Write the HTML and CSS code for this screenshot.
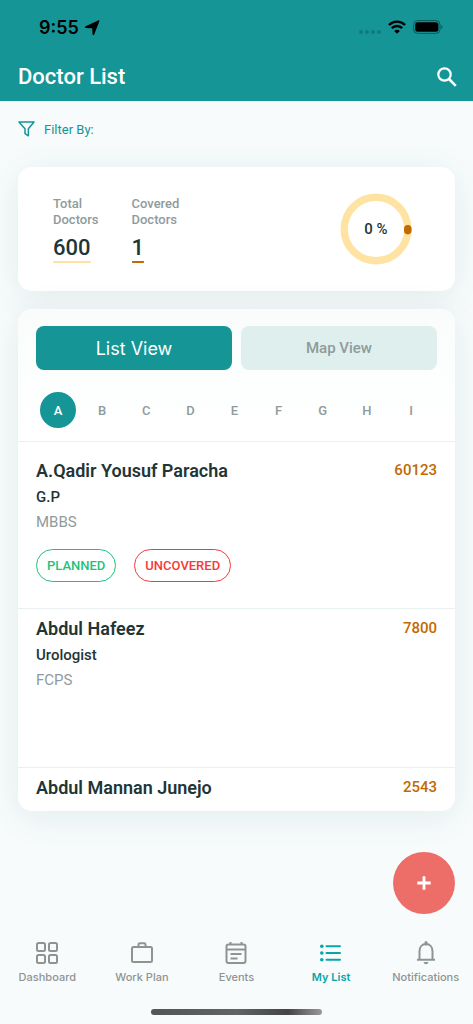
FILE: index.html
```html
<!DOCTYPE html>
<html lang="en">
<head>
<meta charset="utf-8">
<meta name="viewport" content="width=device-width, initial-scale=1">
<title>Doctor List</title>
<link rel="stylesheet" href="styles.css">
</head>
<body>
<div class="app">
  <header class="header">
    <div class="status">
      <div class="status-left">
        <span class="time">9:55</span>
        <svg width="16" height="16" viewBox="0 0 16 16"><path d="M15.300 1.200 10.200 14.600c-.3.8-1.500.8-1.600-.2L8.200 8.300 1.800 7.900C.8 7.800.7 6.600 1.600 6.200L14.200.400c.9-.3 1.400 0 1.100.8z"/></svg>
      </div>
      <div class="status-right">
        <svg width="22" height="6" viewBox="0 0 22 6" fill="#107a7c"><circle cx="2" cy="3" r="2"/><circle cx="8" cy="3" r="2"/><circle cx="14" cy="3" r="2"/><circle cx="20" cy="3" r="2"/></svg>
        <svg class="wifi" width="18" height="14" viewBox="0 0 18 14" fill="none" stroke="#000" stroke-width="2.400"><path d="M1 5c4.500-4.500 11.500-4.500 16 0M3.800 8.100c3-2.900 7.400-2.900 10.400 0"/><path d="M9 13.800 6.200 10.900c1.600-1.500 4-1.500 5.600 0z" fill="#000" stroke="none"/></svg>
        <svg width="30" height="14" viewBox="0 0 30 14"><rect x=".6" y=".6" width="26.400" height="12.800" rx="4" fill="none" stroke="#0c5759"/><rect x="2.200" y="2.200" width="23.200" height="9.600" rx="2.500"/><path d="M28.200 5v4c1.600-.6 1.600-3.400 0-4z" fill="#0c5759"/></svg>
      </div>
    </div>
    <div class="titlebar">
      <h1 class="title">Doctor List</h1>
      <button class="icon-button" aria-label="Search"><svg width="20" height="20" viewBox="0 0 20 20" fill="none" stroke="#fff" stroke-width="2.200"><circle cx="7.500" cy="7.500" r="6.200"/><path d="m12 12 6.800 6.800" stroke-width="2.600"/></svg></button>
    </div>
  </header>
  <main class="main">
    <button class="filter"><svg width="17" height="16" viewBox="0 0 17 16" fill="none" stroke="#159596" stroke-width="1.500" stroke-linejoin="round"><path d="M1 1h15l-5.600 6.800v7L7 12.600V7.800z"/></svg>Filter By:</button>
    <section class="card summary">
      <div class="stat"><span class="stat-label">Total<br>Doctors</span><span class="stat-value total">600</span></div>
      <div class="stat"><span class="stat-label">Covered<br>Doctors</span><span class="stat-value covered">1</span></div>
      <div class="progress">
        <svg width="72" height="72" viewBox="0 0 72 72"><circle cx="36" cy="36" r="31.800" fill="none" stroke="#ffe3a3" stroke-width="7.400"/><rect x="64" y="32" width="7.600" height="9.400" rx="3.800" fill="#c16a02"/></svg>
        <span class="progress-text">0 %</span>
      </div>
    </section>
    <section class="card list">
      <div class="controls">
        <div class="views">
          <button class="view active">List View</button>
          <button class="view">Map View</button>
        </div>
        <div class="letters">
          <button class="letter current">A</button><button class="letter">B</button><button class="letter">C</button><button class="letter">D</button><button class="letter">E</button><button class="letter">F</button><button class="letter">G</button><button class="letter">H</button><button class="letter">I</button>
        </div>
      </div>
      <ul class="doctors">
        <li class="doctor">
          <div class="doctor-head"><h2 class="name">A.Qadir Yousuf Paracha</h2><span class="code">60123</span></div>
          <p class="specialty">G.P</p>
          <p class="degree">MBBS</p>
          <div class="tags"><span class="tag planned">PLANNED</span><span class="tag uncovered">UNCOVERED</span></div>
        </li>
        <li class="doctor">
          <div class="doctor-head"><h2 class="name">Abdul Hafeez</h2><span class="code">7800</span></div>
          <p class="specialty">Urologist</p>
          <p class="degree">FCPS</p>
        </li>
        <li class="doctor">
          <div class="doctor-head"><h2 class="name">Abdul Mannan Junejo</h2><span class="code">2543</span></div>
        </li>
      </ul>
    </section>
    <button class="fab" aria-label="Add"><svg width="14" height="14" viewBox="0 0 14 14" stroke="#fff" stroke-width="2.800"><path d="M7 .3v13.400M.3 7h13.400"/></svg></button>
  </main>
  <nav class="nav">
    <a class="tab" href="#"><svg width="24" height="24" viewBox="0 0 24 24" fill="none" stroke="#8f9493" stroke-width="2"><rect x="2" y="2" width="8" height="8" rx="1.500"/><rect x="14" y="2" width="8" height="8" rx="1.500"/><rect x="2" y="14" width="8" height="8" rx="1.500"/><rect x="14" y="14" width="8" height="8" rx="1.500"/></svg>Dashboard</a>
    <a class="tab" href="#"><svg width="24" height="24" viewBox="0 0 24 24" fill="none" stroke="#8f9493" stroke-width="2"><rect x="2" y="6" width="20" height="15" rx="1.500"/><path d="M8.500 6V3.500q0-1.200 1.200-1.200h4.600q1.200 0 1.200 1.200V6"/></svg>Work Plan</a>
    <a class="tab" href="#"><svg width="24" height="24" viewBox="0 0 24 24" fill="none" stroke="#8f9493" stroke-width="2"><rect x="2.500" y="3.500" width="19" height="18.500" rx="2"/><path d="M6.500 1v3M17.500 1v3M3 8.500h18M6.500 13h11M6.500 17.500h7"/></svg>Events</a>
    <a class="tab selected" href="#"><svg width="24" height="24" viewBox="0 0 24 24" fill="#08a5a8" stroke="#08a5a8" stroke-width="2" stroke-linecap="round"><path d="M7.500 5.300h13.500M7.500 12h13.500M7.500 18.700h13.500"/><g stroke="none"><circle cx="2.800" cy="5.300" r="1.800"/><circle cx="2.800" cy="12" r="1.800"/><circle cx="2.800" cy="18.700" r="1.800"/></g></svg>My List</a>
    <a class="tab" href="#"><svg width="24" height="24" viewBox="0 0 24 24" fill="none" stroke="#8f9493" stroke-width="2"><path d="M5.500 18.500v-8.200C5.500 6 8 3 12 3s6.500 3 6.500 7.300v8.200M3 18.800h18" /><path d="M12 1.500v1.500" stroke-width="3" stroke-linecap="round"/><path d="M9.600 21h4.800c-.3 3-4.500 3-4.800 0z" fill="#8f9493" stroke="none"/></svg>Notifications</a>
  </nav>
  <div class="home-indicator"></div>
</div>
</body>
</html>
```
FILE: styles.css
```css
* { box-sizing: border-box; }
body { margin: 0; background: #f7fbfc; font-family: Roboto, "Liberation Sans", sans-serif; color: #1f3536; }
button { border: 0; padding: 0; background: none; font: inherit; color: inherit; }
h1, h2, p, ul { margin: 0; padding: 0; }
svg { display: block; flex: none; }
.app { display: flex; flex-direction: column; height: 100vh; min-height: 640px; overflow: hidden; }
.header { flex: none; background: #159596; }
.status { display: flex; justify-content: space-between; align-items: center; height: 54px; padding: 0 30px 0 39px; }
.status-left { display: flex; align-items: center; gap: 5px; padding-top: 1px; }
.time { font: 600 18px/24px Inter, sans-serif; color: #000; }
.status-right { display: flex; align-items: center; gap: 7px; }
.status-right svg:first-child { margin-top: 10px; }
.titlebar { display: flex; justify-content: space-between; align-items: center; height: 47px; padding: 0 16px 2px 18px; }
.title { font-size: 22px; font-weight: 500; line-height: 28px; color: #fff; }
.main { position: relative; display: flex; flex-direction: column; flex: 1; min-height: 0; padding: 17px 18px 118px; }
.filter { display: flex; align-items: center; align-self: flex-start; gap: 9px; height: 22px; color: #159596; font-size: 13px; }
.card { border-radius: 14px; background: #fff; box-shadow: 0 6px 36px rgba(21, 90, 80, 0.09); }
.summary { display: flex; align-items: center; gap: 33px; flex: none; height: 124px; margin: 27px 0 18px; padding: 0 43px 0 35px; }
.stat { display: flex; flex-direction: column; align-items: flex-start; }
.stat-label { font-size: 13px; font-weight: 500; line-height: 16px; color: #8f9b9b; }
.stat-value { margin-top: 7px; border-bottom: 2px solid; border-radius: 1px; font-size: 22px; font-weight: 500; line-height: 26px; }
.total { border-color: #ffe3a3; }
.covered { border-color: #c16a02; }
.progress { display: grid; place-items: center; margin-left: auto; }
.progress > * { grid-area: 1 / 1; }
.progress-text { font-size: 15px; font-weight: 500; }
.list { display: flex; flex-direction: column; flex: 1; min-height: 0; overflow: hidden; }
.controls { flex: none; padding: 17px 18px 13px; background: linear-gradient(#fafcfc, #fff); }
.views { display: flex; gap: 9px; }
.view { flex: 1; height: 44px; border-radius: 8px; background: #deefee; color: #8f9b9b; font-size: 15px; font-weight: 500; }
.view.active { background: #159596; color: #fff; font-family: Inter, sans-serif; font-size: 18px; font-weight: 400; }
.letters { display: flex; justify-content: space-between; margin: 22px 8px 0 4px; }
.letter { width: 36px; height: 36px; border-radius: 50%; color: #8f9b9b; font-size: 13px; font-weight: 500; }
.current { background: #159596; color: #fff; }
.doctors { flex: 1; min-height: 0; overflow: hidden; list-style: none; }
.doctor { min-height: 159px; padding: 8px 18px 0; border-top: 1px solid #e8f0f0; }
.doctor:first-child { padding: 17px 18px 26px; }
.doctor-head { display: flex; justify-content: space-between; align-items: flex-start; }
.name { font-size: 18px; font-weight: 600; line-height: 24px; }
.code { font-size: 15px; font-weight: 500; line-height: 22px; color: #c16a02; }
.specialty { margin-top: 2px; font-size: 15px; font-weight: 500; line-height: 25px; }
.degree { font-size: 15px; line-height: 25px; color: #8f9b9b; }
.tags { display: flex; gap: 18px; margin-top: 14px; }
.tag { padding: 0 10px; border: 1px solid; border-radius: 17px; font-size: 13px; font-weight: 500; line-height: 31px; }
.planned { color: #1fc27b; }
.uncovered { color: #f93838; }
.fab { position: absolute; right: 18px; bottom: 15px; display: grid; place-items: center; width: 62px; height: 62px; border-radius: 50%; background: #ed6e69; }
.nav { display: grid; grid-template-columns: repeat(5, 1fr); flex: none; height: 80px; padding-top: 12px; }
.tab { display: flex; flex-direction: column; align-items: center; gap: 4px; color: #8f9493; font: 500 11px/16px Inter, sans-serif; text-decoration: none; }
.selected { color: #08a5a8; font-weight: 600; }
.home-indicator { align-self: center; flex: none; width: 36%; height: 6px; margin-bottom: 9px; border-radius: 3px; background: linear-gradient(90deg, #555, #606463 50%, #444 80%, #999); }
```
